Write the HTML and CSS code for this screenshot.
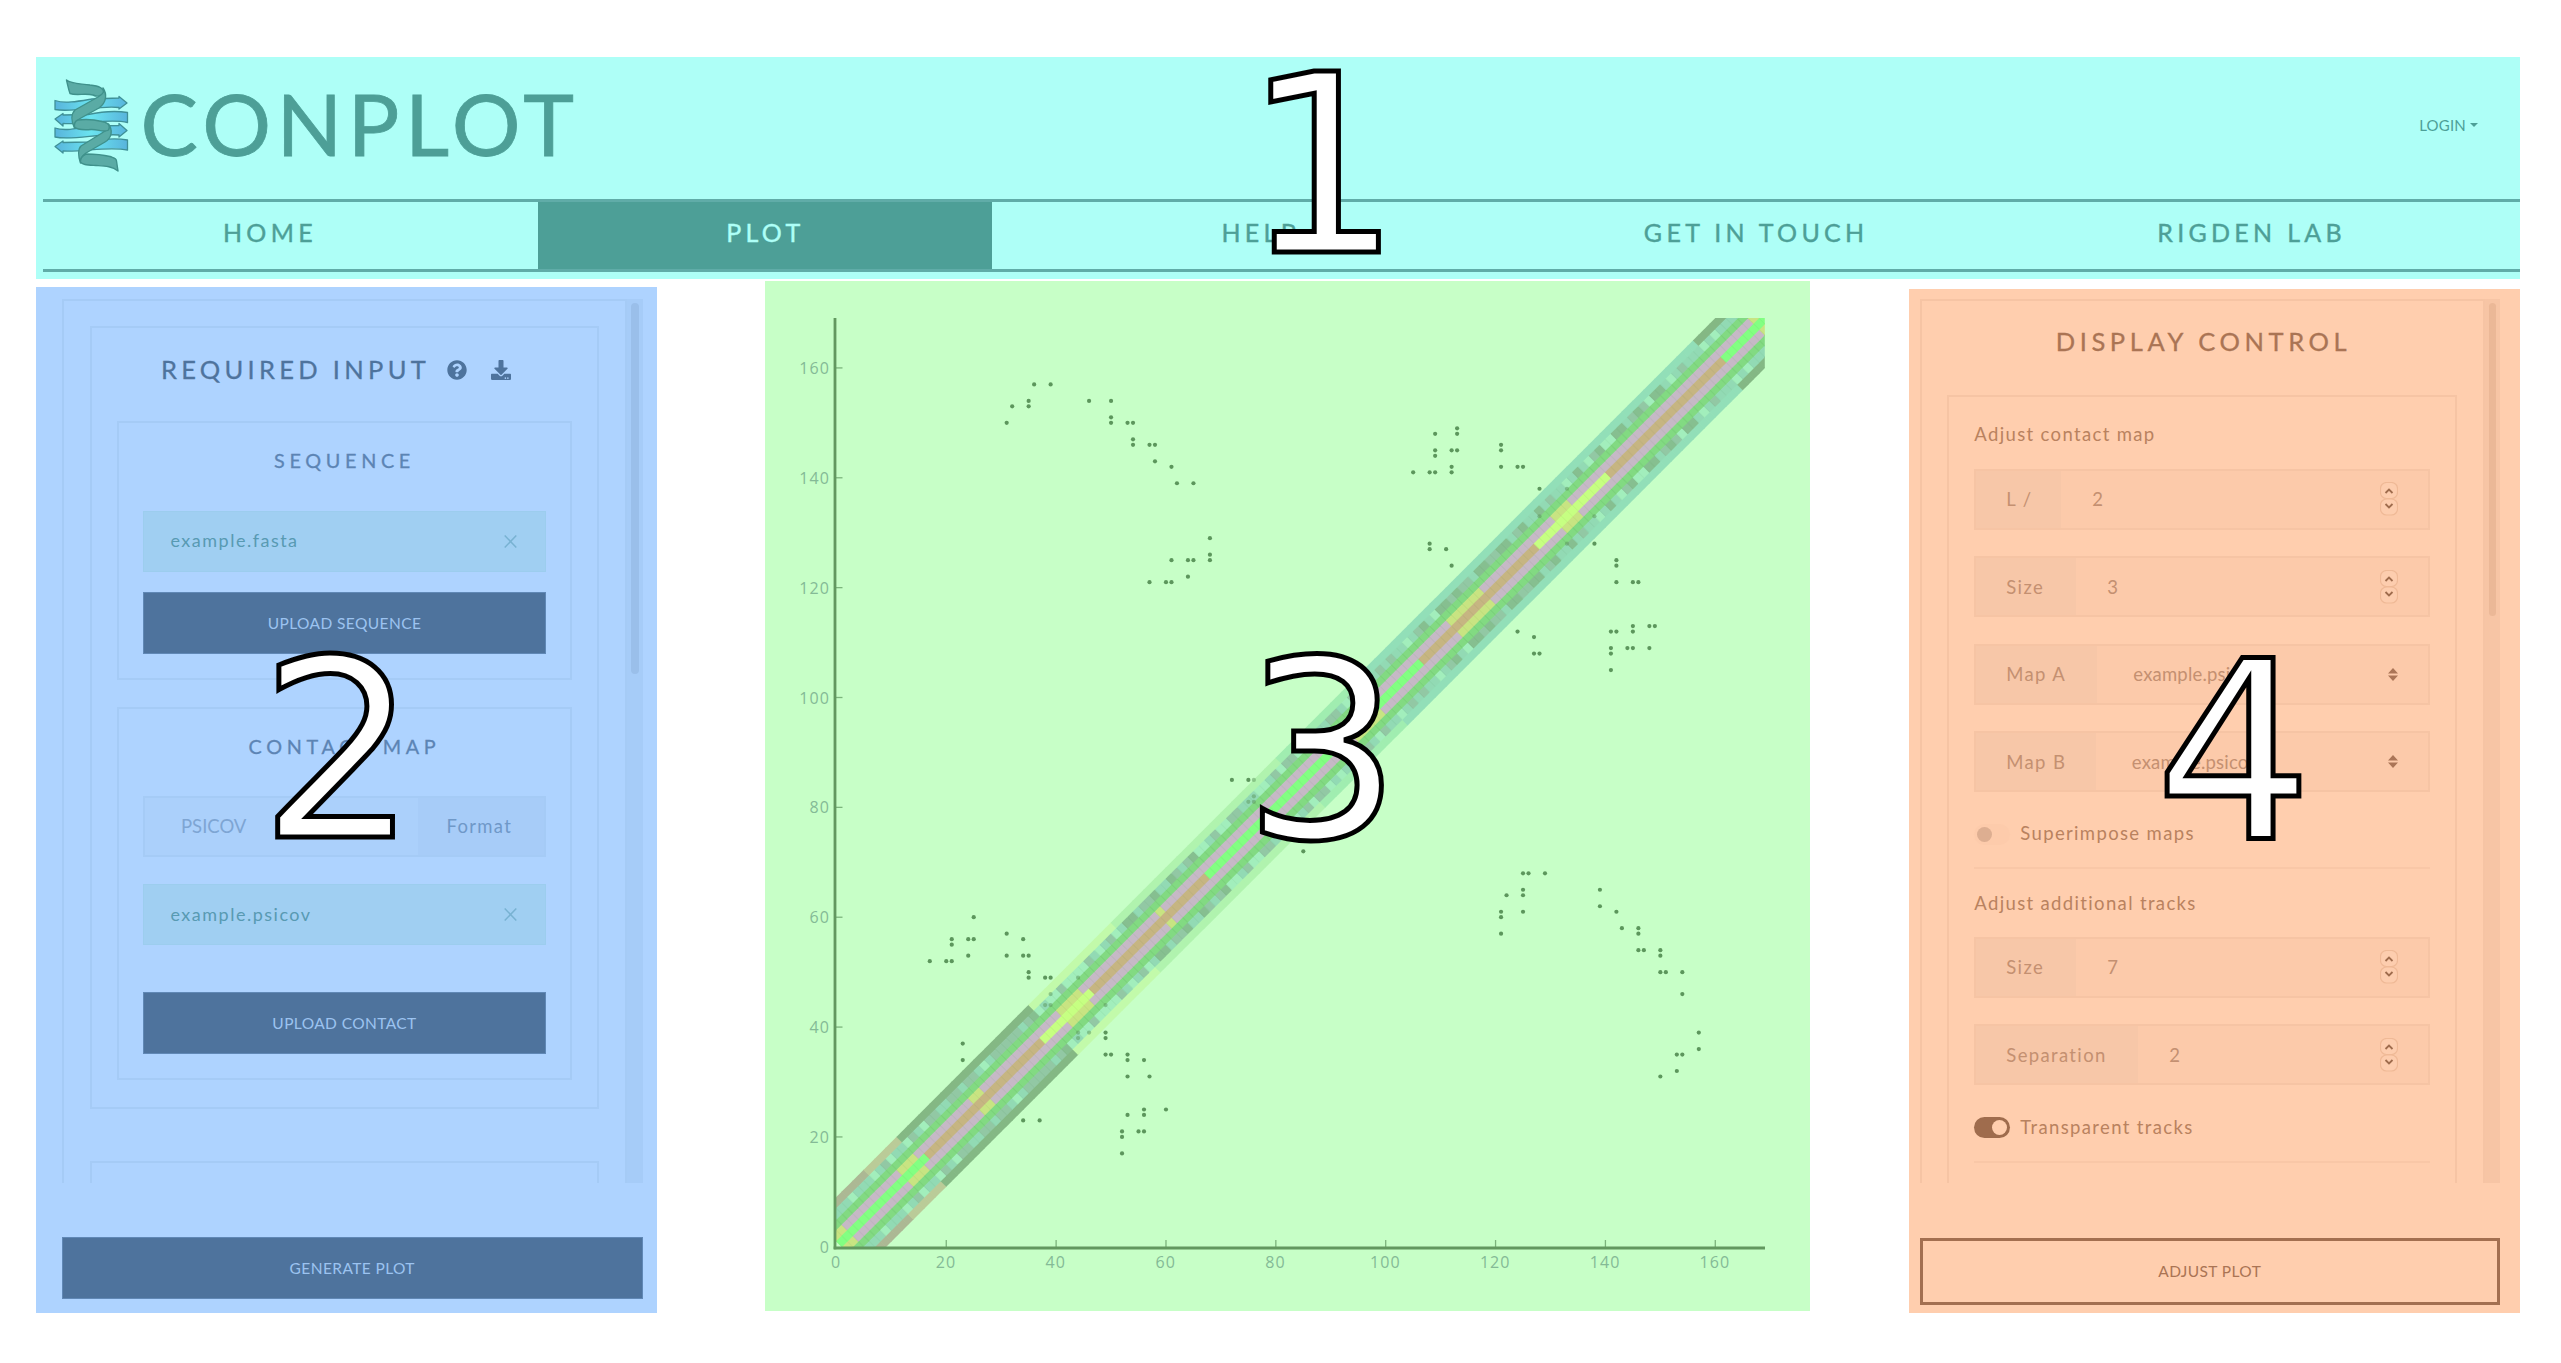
FILE: index.html
```html
<!DOCTYPE html>
<html lang="en">
<head>
<meta charset="utf-8">
<title>ConPlot</title>
<link rel="stylesheet" href="styles.css">
</head>
<body>
<header class="header">
  <div class="brand-row">
    <div class="brand">
      <svg class="logo" width="76" height="96" viewBox="50 76 76 96">
        <defs><linearGradient id="sheet"><stop offset="0" stop-color="#58b4dc"/><stop offset=".5" stop-color="#6be4f0"/><stop offset="1" stop-color="#58b4dc"/></linearGradient></defs>
        <g fill="url(#sheet)" stroke="#3f9097" stroke-width="1.3" stroke-linejoin="round">
          <path d="M55 100.500C65 104 80 101 92 99L119 98V96.500L127 103L119 109V107.500C100 105 72 113 55 109.500Z"/>
          <path d="M127.500 112.500C112 110 100 112 88 114.500L63 115V113.500L55 119L63 126V123.500C85 125 108 118 127.500 122.500Z"/>
          <path d="M55 128C65 131.500 80 128 92 126L119 125.500V123.500L127 130.500L119 137V135C100 133 72 141 55 137Z"/>
          <path d="M127.500 140C112 137.500 100 140 88 142L63 142.500V141L55 146.500L63 153V151C85 152 108 146 127.500 150Z"/>
        </g>
        <g fill="#5aaba5" stroke="#3f918b" stroke-width="1.4" stroke-linejoin="round">
          <path d="M103 88C107 94 107 102 99 108L80 118.500C76 121 74 124 74.500 128C71 121 71 114 75 110L98 97C102 94 104 92 103 88Z"/>
          <path d="M108.500 124C113 130 112 138 105 142L86 153C82 156 80 159 80.500 163C78 156 78 149 81 146L102 133C107 130 109 128 108.500 124Z"/>
          <path d="M66.500 80C71 84 80 83.500 90 85C100 86 104 89 103.500 92C101 96 97 97 93 95C85 93 76 96 70 93.500C68.500 90 68 86 66.500 80Z"/>
          <path d="M74.500 127C74 123 75 121 78 120C86 119 96 120 102 121.500C109 123 110.500 126 108.500 130C104 133 98 129 91 129.500C84 130 77 130 74.500 127Z"/>
          <path d="M80.500 162C80 158 82 156 86 154C94 154 104 155 110 156.500C114 158 116.500 158 116.500 161L118 171C112 166 104 166 96 165.500C88 165 82 165 80.500 162Z"/>
        </g>
      </svg>
      <span class="brand-name">CONPLOT</span>
    </div>
    <div class="login">LOGIN <i class="caret"></i></div>
  </div>
  <nav class="nav">
    <a>HOME</a><a class="active">PLOT</a><a>HELP</a><a class="touch">GET IN TOUCH</a><a class="lab">RIGDEN LAB</a>
  </nav>
</header>

<main class="columns">
  <section class="panel inputs">
    <div class="scroller">
      <div class="scroll-body">
        <div class="card required">
          <h2>REQUIRED INPUT
            <svg width="20" height="20" viewBox="0 0 512 512"><path d="M504 256c0 137-111 248-248 248S8 393 8 256 119 8 256 8s248 111 248 248zM262.700 90c-54.500 0-89.300 23-116.500 63.800-3.500 5.300-2.400 12.400 2.700 16.300l34.700 26.300c5.200 3.900 12.600 3 16.700-2.100 17.900-22.700 30.100-35.800 57.300-35.800 20.400 0 45.700 13.100 45.700 33 0 15-12.400 22.700-32.500 34C247.100 238.500 216 254.900 216 296v4c0 6.600 5.400 12 12 12h56c6.600 0 12-5.400 12-12v-1.300c0-28.500 83.200-29.600 83.200-106.700 0-58-60.200-102-116.500-102zM256 338c-25.400 0-46 20.600-46 46s20.600 46 46 46 46-20.600 46-46-20.600-46-46-46z"/></svg>
            <svg class="dl" width="20" height="20" viewBox="0 0 512 512"><path d="M216 0h80c13.300 0 24 10.700 24 24v168h87.700c17.800 0 26.700 21.500 14.100 34.100L269.700 378.300c-7.500 7.500-19.800 7.500-27.300 0L90.100 226.100c-12.600-12.600-3.700-34.100 14.100-34.100H192V24c0-13.300 10.700-24 24-24zm296 376v112c0 13.300-10.700 24-24 24H24c-13.300 0-24-10.700-24-24V376c0-13.300 10.700-24 24-24h146.700l49 49c20.100 20.100 52.500 20.100 72.600 0l49-49H488c13.300 0 24 10.700 24 24zm-124 88a20 20 0 1 0-40 0 20 20 0 0 0 40 0zm64 0a20 20 0 1 0-40 0 20 20 0 0 0 40 0z"/></svg>
          </h2>
          <div class="card group">
            <h3>SEQUENCE</h3>
            <div class="file"><span>example.fasta</span><svg width="13" height="13" viewBox="0 0 13 13"><path d="M.7.500l11.600 12M12.300.500L.7 12.500"/></svg></div>
            <button class="solid up-seq">UPLOAD SEQUENCE</button>
          </div>
          <div class="card group second">
            <h3>CONTACT MAP</h3>
            <div class="format"><span class="fmt-value">PSICOV</span><span class="fmt-label">Format</span></div>
            <div class="file"><span>example.psicov</span><svg width="13" height="13" viewBox="0 0 13 13"><path d="M.7.500l11.600 12M12.300.500L.7 12.500"/></svg></div>
            <button class="solid up-con">UPLOAD CONTACT</button>
          </div>
        </div>
        <div class="card next"></div>
      </div>
      <div class="track"><i></i></div>
    </div>
    <button class="solid generate">GENERATE PLOT</button>
  </section>

  <section class="panel plot">
    <svg id="plot" width="1045" height="1030" viewBox="765 281 1045 1030"></svg>
  </section>

  <section class="panel display">
    <div class="scroller">
      <div class="scroll-body">
        <h2>DISPLAY CONTROL</h2>
        <div class="card controls">
          <p class="label l1">Adjust contact map</p>
          <div class="row"><span class="addon a-l">L /</span><span class="val">2</span><span class="spin"><svg width="18" height="34" viewBox="0 0 18 34"><rect x=".5" y=".5" width="17" height="16" rx="6"/><rect x=".5" y="17" width="17" height="16" rx="6"/><path d="M5.500 11L9 7.500L12.500 11M5.500 22L9 25.500L12.500 22"/></svg></span></div>
          <div class="row"><span class="addon a-size">Size</span><span class="val">3</span><span class="spin"><svg width="18" height="34" viewBox="0 0 18 34"><rect x=".5" y=".5" width="17" height="16" rx="6"/><rect x=".5" y="17" width="17" height="16" rx="6"/><path d="M5.500 11L9 7.500L12.500 11M5.500 22L9 25.500L12.500 22"/></svg></span></div>
          <div class="row"><span class="addon a-ma">Map A</span><span class="val sel">example.psicov</span><svg class="sort" width="10" height="13" viewBox="0 0 10 13"><path d="M0 5.500L5 0L10 5.500ZM0 7.500L5 13L10 7.500Z"/></svg></div>
          <div class="row"><span class="addon a-mb">Map B</span><span class="val sel">example.psicov</span><svg class="sort" width="10" height="13" viewBox="0 0 10 13"><path d="M0 5.500L5 0L10 5.500ZM0 7.500L5 13L10 7.500Z"/></svg></div>
          <div class="switch"><i class="toggle"></i><span>Superimpose maps</span></div>
          <hr>
          <p class="label l2">Adjust additional tracks</p>
          <div class="row"><span class="addon a-size">Size</span><span class="val">7</span><span class="spin"><svg width="18" height="34" viewBox="0 0 18 34"><rect x=".5" y=".5" width="17" height="16" rx="6"/><rect x=".5" y="17" width="17" height="16" rx="6"/><path d="M5.500 11L9 7.500L12.500 11M5.500 22L9 25.500L12.500 22"/></svg></span></div>
          <div class="row"><span class="addon a-sep">Separation</span><span class="val">2</span><span class="spin"><svg width="18" height="34" viewBox="0 0 18 34"><rect x=".5" y=".5" width="17" height="16" rx="6"/><rect x=".5" y="17" width="17" height="16" rx="6"/><path d="M5.500 11L9 7.500L12.500 11M5.500 22L9 25.500L12.500 22"/></svg></span></div>
          <div class="switch"><i class="toggle on"></i><span>Transparent tracks</span></div>
          <hr>
        </div>
      </div>
      <div class="track"><i></i></div>
    </div>
    <button class="outline">ADJUST PLOT</button>
  </section>
</main>

<svg class="numbers" width="2561" height="1363" viewBox="0 0 2561 1363">
  <text x="1243.500" y="251.500">1</text>
  <text x="259.500" y="837">2</text>
  <text x="1243.500" y="836.500">3</text>
  <text x="2155" y="838.500">4</text>
</svg>
<script src="plot.js"></script>
</body>
</html>
```
FILE: styles.css
```css
* { box-sizing: border-box; }
body {
  margin: 0;
  width: 2561px;
  height: 1363px;
  overflow: hidden;
  padding: 57px 41px 0 36px;
  background: #fff;
  font-family: Lato, "Open Sans", sans-serif;
}
h2, h3, p { margin: 0; font-weight: 400; white-space: nowrap; }

/* header */
.header { height: 221.500px; background: #aefff7; color: #4d9f97; }
.brand-row { height: 142px; display: flex; justify-content: space-between; align-items: flex-start; }
.brand { display: flex; padding: 19px 0 0 14px; }
.logo { overflow: visible; }
.brand-name { font-size: 86px; line-height: 96px; margin: -1px 0 0 14.500px; letter-spacing: 5.500px; -webkit-text-stroke: .8px #4d9f97; }
.login { padding: 59px 42px 0 0; font-size: 15px; letter-spacing: .2px; line-height: 18px; display: flex; align-items: center; gap: 4px; }
.caret { border: 4px solid transparent; border-top-color: #4d9f97; border-bottom: 0; }
.nav { margin-left: 7px; height: 73px; display: flex; border-top: 3px solid #60aca8; border-bottom: 3px solid #60aca8; }
.nav a { flex: 1; margin-right: 41.500px; display: flex; align-items: center; justify-content: center; padding-bottom: 7px; font-size: 25px; letter-spacing: 4.300px; -webkit-text-stroke: .4px; }
.nav .active { background: #4d9f97; color: #aefff7; }

/* columns */
.columns { display: flex; justify-content: space-between; align-items: flex-start; padding-top: 2px; }
.panel { display: flex; flex-direction: column; }
.inputs { margin-top: 6px; width: 621px; height: 1026px; background: #aed3ff; padding: 12px 14.500px 0 26px; }
.plot { width: 1045px; height: 1030.500px; background: #c7ffc7; margin-left: 9px; }
.display { margin-top: 8px; width: 611px; height: 1024px; background: #ffceae; padding: 10px 20px 0 10.500px; }
.scroller { height: 884.500px; display: flex; flex: none; overflow: hidden; }
.scroll-body { flex: 1; border: 2px solid var(--line); border-bottom: 0; overflow: hidden; padding: 0 25.800px; }
.track { width: 15.500px; background: var(--track); padding: 4px 4px; }
.track i { display: block; width: 7.500px; border-radius: 4px; background: var(--thumb); }
.card { border: 2px solid var(--line); }

.inputs { --line: #a5cbf6; --track: #a6ccf8; --thumb: #9abfea; color: #5c84b4; }
.inputs .track i { height: 371px; }
.required { margin-top: 25px; height: 783px; padding: 0 25px; }
.next { margin-top: 52px; height: 100px; }
h2 { font-size: 25.500px; letter-spacing: 4.600px; display: flex; justify-content: center; align-items: center; -webkit-text-stroke: .3px; }
.inputs h2 { height: 93px; color: #4e739d; fill: #4e739d; padding: 0 17px 11px 0; letter-spacing: 4.300px; }
.inputs h2 svg { margin: 2px 0 0 17px; stroke-width: 0; }
.inputs h2 .dl { margin-left: 24px; }
.group { height: 259px; padding: 0 24.700px; }
.group.second { height: 373px; margin-top: 27.500px; }
h3 { height: 78px; font-size: 19.800px; letter-spacing: 4.700px; text-align: center; line-height: 75px; -webkit-text-stroke: .3px; }
.file { margin-top: 10px; height: 61px; padding: 0 28px 0 26px; display: flex; align-items: center; justify-content: space-between; background: #a0cff2; border: 1px solid #9ccdee; color: #589ab2; font-size: 18px; letter-spacing: 1.500px; }
.file svg { stroke: #78b2d2; stroke-width: 1.500; }
.file span { margin-top: -2px; }
button { font: 15.500px Lato, "Open Sans", sans-serif; letter-spacing: .4px; padding: 0; border-radius: 0; }
.solid { display: block; width: 100%; height: 62px; margin-top: 20.500px; border: 1px solid #6088b6; background: #4e739d; color: #9cc3f0; }
.up-con { margin-top: 47px; }
.format { margin-top: 9px; height: 61px; display: flex; border: 2px solid var(--line); background: #abd0fb; font-size: 18.500px; color: #7ea5d3; }
.format span { display: flex; align-items: center; padding-bottom: 1px; }
.fmt-value { flex: 1; padding-left: 35.500px; }
.fmt-label { width: 125.500px; padding-left: 28.500px; background: #a7ccf8; color: #6f98c8; letter-spacing: 1.300px; }
.format + .file { margin-top: 27px; }
.generate { margin-top: 53.500px; flex: none; }

.display { --line: #f6c4a4; --track: #f7c5a5; --thumb: #ebb897; color: #c49071; }
.display .track i { height: 313px; }
.display h2 { height: 94px; padding: 0 0 13px 3px; color: #aa7454; }
.controls { height: 900px; padding: 0 25px; font-size: 18.500px; letter-spacing: 1.350px; }
.label { color: #b9825f; line-height: 24px; }
.l1 { padding: 25px 0 22px; height: 72px; }
.row { height: 61px; margin-bottom: 26.600px; display: flex; align-items: center; border: 2px solid var(--line); background: #fccaaa; }
.addon { height: 100%; display: flex; align-items: center; padding-left: 30px; background: #f7c7a8; }
.a-l { width: 85px; } .a-size { width: 100px; } .a-ma { width: 121px; } .a-mb { width: 119.500px; } .a-sep { width: 162px; }
.val { flex: 1; padding-left: 31px; }
.val.sel { padding-left: 36px; letter-spacing: .2px; }
.spin { height: 34px; margin-right: 30px; }
.spin svg { display: block; }
.spin rect { fill: #fdcdae; stroke: #efb996; stroke-width: 1.200; }
.spin path { fill: none; stroke: #9f6c4d; stroke-width: 1.800; }
.sort { margin-right: 30px; fill: #ab7557; }
.switch { height: 31px; display: flex; align-items: center; gap: 10px; color: #b9825f; }
.switch span { padding-bottom: 2px; }
.toggle { width: 36px; height: 21px; border-radius: 11px; background: #fdcbab; padding: 3px; }
.toggle::after { content: ""; display: block; width: 15px; height: 15px; border-radius: 50%; background: #ddae91; }
.toggle.on { background: #9f6c4d; }
.toggle.on::after { margin-left: 15px; background: #ffceae; }
hr { border: 0; border-top: 2px solid #f9c7a7; margin: 17.500px 0 19.500px; }
.l2 { padding: 2px 0 23px; height: 48px; }
.outline { margin-top: 54.500px; height: 67px; flex: none; border: 3px solid #a36f50; background: #ffceae; color: #aa7454; }

/* plot */
#plot { display: block; }
.axis { stroke: #62985f; stroke-width: 2.800; }
.tick { stroke: #7cb47c; stroke-width: 1.300; }
.tick-label { font: 16px "Open Sans"; letter-spacing: 1.100px; fill: #84ba96; }
.dot { fill: #5c965c; }

/* section numbers over the panels */
.numbers { position: absolute; left: 0; top: 0; font: 248px "DejaVu Sans"; fill: #fff; stroke: #000; stroke-width: 5; }
```
FILE: plot.js
```js
// Contact map: dots for predicted contacts, coloured tracks along the diagonal.
const NS = "http://www.w3.org/2000/svg";
const plot = document.getElementById("plot");
const U = 5.493, X0 = 836.4, Y0 = 1246.8;
const px = i => X0 + U * i, py = j => Y0 - U * j;

function add(parent, tag, attrs, text) {
  const e = document.createElementNS(NS, tag);
  for (const k in attrs) e.setAttribute(k, attrs[k]);
  if (text !== undefined) e.textContent = text;
  parent.appendChild(e);
  return e;
}

const clip = add(plot, "clipPath", { id: "area" });
add(clip, "rect", { x: 835.5, y: 318, width: 929.3, height: 929 });
const band = add(plot, "g", { "clip-path": "url(#area)" });

// Each track is a list of [last residue, colour].
const P = "#c6b9c6", Y = "#c8e482", O = "#c6b582", G = "#82ff82", B = "#c6ff82";
const tracks = {
  0: [[16, G], [37, O], [46, B], [67, O], [106, G], [127, O], [140, B], [161, O], [169, G]],
  2: [[2, Y], [12, P], [15, Y], [25, P], [27, Y], [41, P], [45, Y], [59, P], [60, Y], [93, P],
      [98, Y], [112, P], [118, Y], [131, P], [134, Y], [167, P], [169, Y]],
  4: [[169, "#82da82"]],
  8: [[9, "#acb894"], [15, "#bacb98"], [39, "#84b884"], [54, "#c2faaa"], [84, "#b0f3ae"],
      [99, "#a0edb0"], [160, "#92dfb8"], [169, "#84b884"]]
};
const conservation =
  "TTTTTLTTTLTGLTTLGTLGGTTGGTGGTLTGGGGGTGDLTLLGLLLLGTLTGLTDDTGGDTTDGTGDLLTGLLGGTTTLLTGLGGLTLTTTGGTLGTTLTGTGTTLTGDTLDDGDGGTDDGGDDTGDTTDTGTTLTDTLGDLLDDTGDGLDDTLTGTTTLTLTTTTTT";
const tone = { L: "#a2eebc", T: "#92dab4", G: "#92c8a4", D: "#86bf90" };

function cell(t, off, color) {
  const S = U * Math.SQRT2;
  for (const s of off ? [-1, 1] : [1]) {
    const x = px(t - s * off / 2), y = py(t + s * off / 2);
    const g = add(band, "g", { transform: `translate(${x} ${y}) rotate(-45)` });
    add(g, "rect", { x: -S / 2 - .3, y: -S / 2 - .3, width: S + .6, height: S + .6, fill: color });
    if (off !== 8) add(g, "rect", { x: -S / 2 - .5, y: -S / 2, width: 1, height: S, fill: "#205020", opacity: off === 4 ? .07 : .04 });
  }
}
for (let t = 1; t <= 172; t++) {
  for (const off of [8, 4, 2, 0]) {
    const run = tracks[off].find(r => t <= r[0]) || tracks[off][tracks[off].length - 1];
    if (t <= 169 || off === 8) cell(t, off, run[1]);
  }
  cell(t, 6, tone[conservation[t - 1] || "T"]);
}

const contacts = `31,150 32,153 35,154 35,153 36,157 39,157 46,154 50,154 50,151 50,150 53,150 54,150
54,147 54,146 57,146 58,146 58,143 61,142 62,139 65,139 68,129 68,126 68,125 61,125 64,125 65,125 64,122
57,121 60,121 61,121 72,85 75,85 76,85 76,82 75,81 76,81 109,148 113,149 113,148 109,145 109,144 112,145
113,145 112,142 112,141 105,141 108,141 109,141 121,146 121,145 121,142 124,142 125,142 128,138 133,138
128,133 108,128 108,127 111,127 112,124 25,60 21,56 21,55 24,56 25,56 24,53 17,52 20,52 21,52 31,57 31,53
34,56 34,53 35,53 35,50 35,49 38,49 39,49 39,46 38,44 39,44 44,49 23,37 23,34`;
for (const c of contacts.split(/\s+/)) {
  const [i, j] = c.split(",").map(Number);
  const hidden = j - i < 9 || (i === 76 && j === 85);
  for (const [a, b] of [[i, j], [j, i]])
    add(plot, "circle", { class: "dot", cx: px(a), cy: py(b), r: 2.1, opacity: hidden ? .5 : 1 });
}

for (let v = 0; v <= 160; v += 20) {
  if (v) {
    add(plot, "line", { class: "tick", x1: 836, x2: 842.5, y1: py(v), y2: py(v) });
    add(plot, "line", { class: "tick", x1: px(v), x2: px(v), y1: 1247, y2: 1240 });
  }
  add(plot, "text", { class: "tick-label", x: 830, y: py(v) + 6, "text-anchor": "end" }, v);
  add(plot, "text", { class: "tick-label", x: px(v) - .3, y: 1267.5, "text-anchor": "middle" }, v);
}
add(plot, "line", { class: "axis", x1: 835, x2: 835, y1: 318, y2: 1249.3 });
add(plot, "line", { class: "axis", x1: 833.7, x2: 1765, y1: 1248, y2: 1248 });
```
